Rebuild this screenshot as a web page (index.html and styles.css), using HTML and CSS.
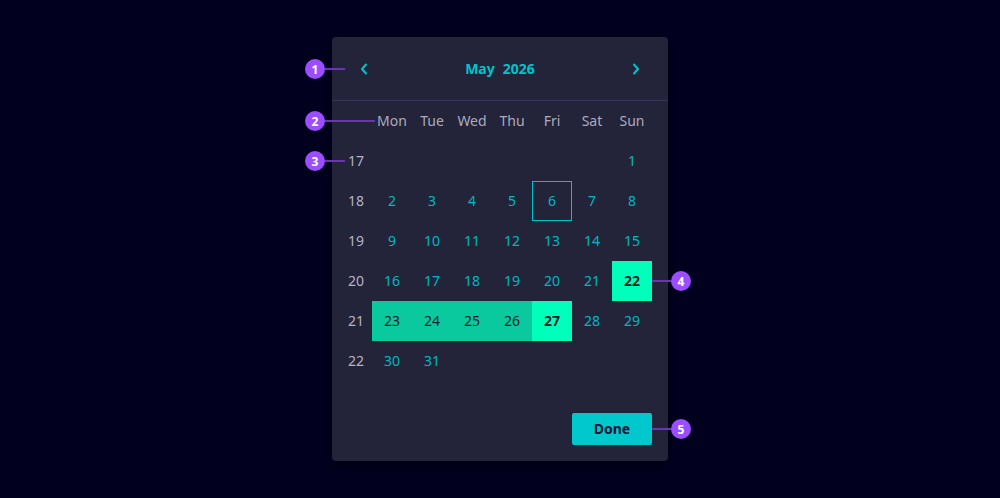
FILE: index.html
```html
<!DOCTYPE html>
<html lang="en">
<head>
<meta charset="utf-8">
<title>Date picker</title>
<link rel="stylesheet" href="styles.css">
</head>
<body>
<div class="stage">
  <div class="picker">
    <div class="header">
      <button class="nav">
        <svg width="10" height="12" viewBox="0 0 10 12"><path d="M7 1.5 L3 6 L7 10.5" fill="none" stroke="#00c4cc" stroke-width="2" stroke-linecap="round" stroke-linejoin="round"/></svg>
      </button>
      <div class="title"><span>May</span><span>2026</span></div>
      <button class="nav">
        <svg width="10" height="12" viewBox="0 0 10 12"><path d="M3 1.5 L7 6 L3 10.5" fill="none" stroke="#00c4cc" stroke-width="2" stroke-linecap="round" stroke-linejoin="round"/></svg>
      </button>
    </div>
    <div class="body">
      <div class="grid">
        <div class="wk"></div>
        <div class="dow">Mon</div><div class="dow">Tue</div><div class="dow">Wed</div><div class="dow">Thu</div><div class="dow">Fri</div><div class="dow">Sat</div><div class="dow">Sun</div>

        <div class="wk">17</div>
        <div class="day"></div><div class="day"></div><div class="day"></div><div class="day"></div><div class="day"></div><div class="day"></div><div class="day">1</div>

        <div class="wk">18</div>
        <div class="day">2</div><div class="day">3</div><div class="day">4</div><div class="day">5</div><div class="day today">6</div><div class="day">7</div><div class="day">8</div>

        <div class="wk">19</div>
        <div class="day">9</div><div class="day">10</div><div class="day">11</div><div class="day">12</div><div class="day">13</div><div class="day">14</div><div class="day">15</div>

        <div class="wk">20</div>
        <div class="day">16</div><div class="day">17</div><div class="day">18</div><div class="day">19</div><div class="day">20</div><div class="day">21</div><div class="day end">22</div>

        <div class="wk">21</div>
        <div class="day range">23</div><div class="day range">24</div><div class="day range">25</div><div class="day range">26</div><div class="day end">27</div><div class="day">28</div><div class="day">29</div>

        <div class="wk">22</div>
        <div class="day">30</div><div class="day">31</div><div class="day"></div><div class="day"></div><div class="day"></div><div class="day"></div><div class="day"></div>
      </div>
      <div class="footer">
        <button class="done">Done</button>
      </div>
    </div>
  </div>

  <div class="note n1"><span class="dot">1</span><span class="line"></span></div>
  <div class="note n2"><span class="dot">2</span><span class="line"></span></div>
  <div class="note n3"><span class="dot">3</span><span class="line"></span></div>
  <div class="note n4 right"><span class="line"></span><span class="dot">4</span></div>
  <div class="note n5 right"><span class="line"></span><span class="dot">5</span></div>
</div>
</body>
</html>
```

FILE: styles.css
```css
html, body {
  margin: 0;
  padding: 0;
  background: #02001f;
}
body {
  font-family: "Noto Sans", "Open Sans", sans-serif;
  width: 1000px;
  height: 498px;
  overflow: hidden;
}
.stage {
  position: relative;
  width: 1000px;
  height: 498px;
  display: flex;
  justify-content: center;
  padding-top: 37px;
  box-sizing: border-box;
}
.picker {
  width: 336px;
  height: 424px;
  background: #23233a;
  border-radius: 4px;
  box-shadow: 0 4px 12px rgba(0, 0, 0, 0.4);
  display: flex;
  flex-direction: column;
}
.header {
  height: 63px;
  border-bottom: 1px solid #37365a;
  display: flex;
  align-items: center;
  justify-content: space-between;
  padding: 0 16px;
}
.nav {
  width: 32px;
  height: 32px;
  background: none;
  border: 0;
  padding: 0;
  display: flex;
  align-items: center;
  justify-content: center;
}
.title {
  color: #00c4cc;
  font-weight: 700;
  font-size: 14px;
  display: flex;
  gap: 8px;
  padding-bottom: 1px;
}
.body {
  padding: 0 16px 16px 8px;
  display: flex;
  flex-direction: column;
}
.grid {
  display: grid;
  grid-template-columns: 32px repeat(7, 40px);
  grid-auto-rows: 40px;
}
.wk, .dow, .day {
  display: flex;
  align-items: center;
  justify-content: center;
  font-size: 14px;
  box-sizing: border-box;
  padding-bottom: 2px;
}
.wk {
  color: #b4b4c4;
}
.dow {
  color: #ababbd;
}
.day {
  color: #00b8c2;
}
.day.today {
  border: 1px solid #00c4cc;
  padding-bottom: 2px;
}
.day.range {
  background: #0bc99e;
  color: #0f1d2c;
}
.day.end {
  background: #00ffbb;
  color: #0f1d2c;
  font-weight: 700;
}
.footer {
  display: flex;
  justify-content: flex-end;
  padding-top: 32px;
}
.done {
  width: 80px;
  height: 32px;
  border: 0;
  border-radius: 2px;
  background: #00c8cc;
  color: #131336;
  font-family: "Noto Sans", "Open Sans", sans-serif;
  font-weight: 700;
  font-size: 14px;
  padding: 0 0 1px;
}
.note {
  position: absolute;
  display: flex;
  align-items: center;
  height: 20px;
}
.dot {
  width: 20px;
  height: 20px;
  border-radius: 50%;
  background: #9b4dff;
  color: #fff;
  font-weight: 700;
  font-size: 12px;
  display: flex;
  align-items: center;
  justify-content: center;
}
.line {
  height: 2px;
  background: #6a35b0;
}
.n1 { left: 305px; top: 59px; }
.n1 .line { width: 20px; }
.n2 { left: 305px; top: 111px; }
.n2 .line { width: 50px; }
.n3 { left: 305px; top: 151px; }
.n3 .line { width: 20px; }
.n4 { left: 652px; top: 271px; }
.n4 .line { width: 19px; }
.n5 { left: 652px; top: 419px; }
.n5 .line { width: 19px; }
```
